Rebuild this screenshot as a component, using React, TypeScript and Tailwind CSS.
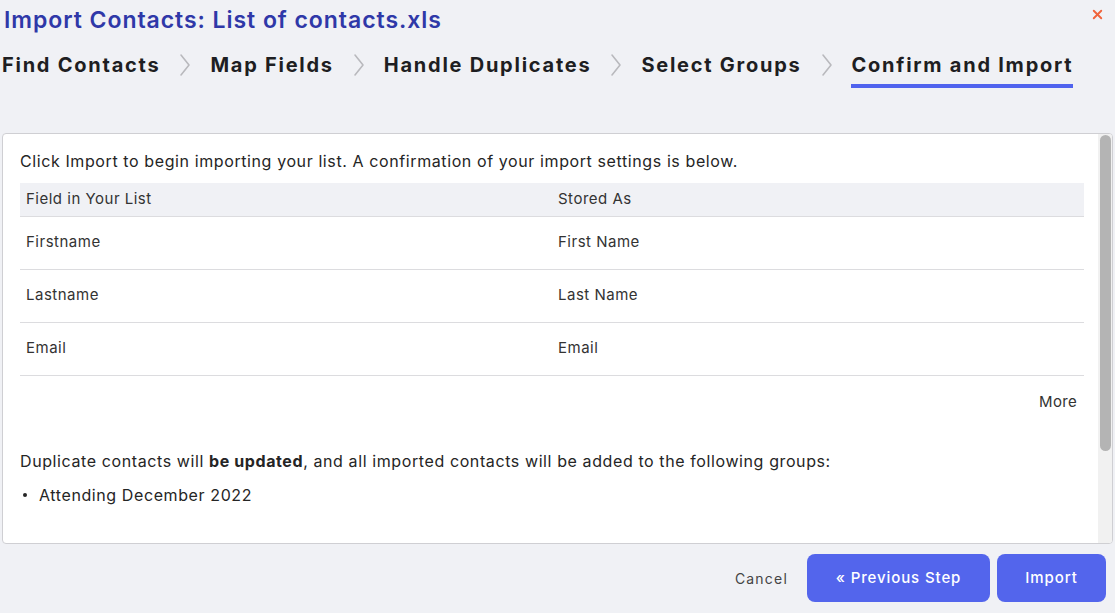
import { X } from 'lucide-react';

const steps = ['Find Contacts', 'Map Fields', 'Handle Duplicates', 'Select Groups', 'Confirm and Import'];

const mappings = [
  { field: 'Firstname', stored: 'First Name' },
  { field: 'Lastname', stored: 'Last Name' },
  { field: 'Email', stored: 'Email' },
];

function StepChevron() {
  return (
    <svg width="12" height="24" viewBox="0 0 12 24" className="mx-[19px] mt-[2px] text-[#b9b9bd]">
      <polyline points="2,2 10,12 2,22" fill="none" stroke="currentColor" strokeWidth="1.6" strokeLinecap="round" strokeLinejoin="round" />
    </svg>
  );
}

export default function App() {
  return (
    <div
      className="w-[1115px] h-[613px] bg-[#f0f1f5] text-[#222] overflow-hidden relative"
      style={{ fontFamily: 'Inter, "Noto Sans", sans-serif' }}
    >
      <button className="absolute right-[10px] top-[7px] text-[#f0643c]">
        <X size={15} strokeWidth={3} />
      </button>

      <h1 className="pl-[4px] pt-[5px] text-[23px] leading-[30px] font-semibold text-[#2f38a8] tracking-[0.95px]">
        Import Contacts: List of contacts.xls
      </h1>

      {/* steps */}
      <div className="flex items-start mt-[16px] pl-[2px] h-[60px]">
        {steps.map((step, i) => {
          const active = i === steps.length - 1;
          return (
            <div key={step} className="flex items-start">
              <div className="flex flex-col">
                <span className="text-[20px] leading-[28px] font-bold tracking-[1.75px] text-[#1e1e22]">{step}</span>
                {active && <div className="h-[4px] bg-[#5063ee] mt-[5px] ml-[-1px]" />}
              </div>
              {!active && <StepChevron />}
            </div>
          );
        })}
      </div>

      {/* panel */}
      <div className="mx-[2px] mt-[22px] h-[411px] bg-white border border-[#cfcfd3] rounded-[4px] flex overflow-hidden">
        <div className="flex-1 pl-[17px] pr-[14px] pt-[17px] text-[16px] text-[#252525]">
          <p className="leading-[20px] tracking-[0.6px]">
            Click Import to begin importing your list. A confirmation of your import settings is below.
          </p>
          <div className="mt-[12px]">
            <div className="grid grid-cols-2 bg-[#f0f1f5] h-[34px] items-center border-b border-[#dcdcdf] text-[15px] text-[#333]">
              <div className="pl-[6px] tracking-[0.5px]">Field in Your List</div>
              <div className="pl-[6px] tracking-[0.5px]">Stored As</div>
            </div>
            {mappings.map((m) => (
              <div key={m.field} className="grid grid-cols-2 h-[53px] items-center border-b border-[#dcdcdf] text-[15px] text-[#333]">
                <div className="pl-[6px] tracking-[0.5px] -mt-[1px]">{m.field}</div>
                <div className="pl-[6px] tracking-[0.5px] -mt-[1px]">{m.stored}</div>
              </div>
            ))}
            <div className="flex justify-end pr-[7px] pt-[15px] text-[15px] text-[#333] tracking-[0.3px]">More</div>
          </div>
          <p className="mt-[37px] leading-[20px] tracking-[0.6px]">
            Duplicate contacts will <b className="font-bold">be updated</b>, and all imported contacts will be added to the following groups:
          </p>
          <ul className="mt-[14px] leading-[20px] tracking-[0.6px]">
            <li className="flex items-center">
              <span className="w-[4px] h-[4px] rounded-full bg-[#252525] ml-[3px] mr-[12px]" />
              Attending December 2022
            </li>
          </ul>
        </div>
        {/* scrollbar */}
        <div className="w-[14px] bg-[#f1f1f1] flex justify-center pt-[1px]">
          <div className="w-[11px] h-[316px] bg-[#b4b4b4] rounded-[6px]" />
        </div>
      </div>

      {/* footer */}
      <div className="flex justify-end items-center gap-[7px] mt-[10px] pr-[9px]">
        <button className="text-[14px] text-[#444] tracking-[1.2px] mr-[12px]">Cancel</button>
        <button className="h-[48px] w-[183px] rounded-[8px] bg-[#5365ec] text-white text-[15px] font-medium tracking-[0.9px]">
          « Previous Step
        </button>
        <button className="h-[48px] w-[109px] rounded-[8px] bg-[#5365ec] text-white text-[15px] font-medium tracking-[0.9px]">
          Import
        </button>
      </div>
    </div>
  );
}
